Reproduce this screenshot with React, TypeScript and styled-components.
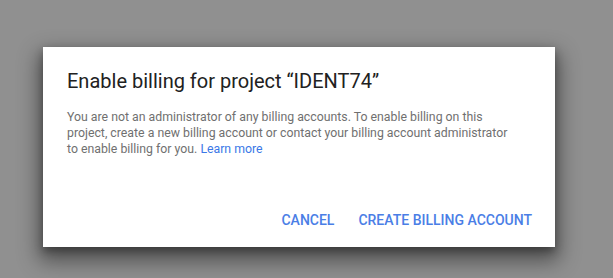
import styled, { createGlobalStyle } from 'styled-components';

const GlobalStyle = createGlobalStyle`
  html, body {
    margin: 0;
    padding: 0;
    background: #909090;
    font-family: Roboto, "Liberation Sans", Arial, sans-serif;
  }
`;

const Backdrop = styled.div`
  width: 613px;
  height: 278px;
  padding: 47px 0 0 43px;
  box-sizing: border-box;
  overflow: hidden;
`;

const Dialog = styled.section`
  width: 512px;
  height: 200px;
  box-sizing: border-box;
  background: #fff;
  padding: 22px 23px 9px 24px;
  display: flex;
  flex-direction: column;
  box-shadow: 0 10px 20px 4px rgba(0, 0, 0, 0.45), 0 4px 8px rgba(0, 0, 0, 0.3);
`;

const Title = styled.h2`
  margin: 0;
  font-size: 20px;
  line-height: 24px;
  font-weight: 400;
  color: #212121;
`;

const Body = styled.p`
  margin: 16px 0 0;
  font-size: 12.3px;
  line-height: 16px;
  color: #707070;
  white-space: nowrap;
`;

const Link = styled.a`
  color: #3b78e7;
  text-decoration: none;
`;

const Actions = styled.div`
  margin-top: auto;
  display: flex;
  justify-content: flex-end;
`;

const ActionButton = styled.button`
  border: 0;
  background: transparent;
  font-family: inherit;
  font-size: 14px;
  font-weight: 500;
  line-height: 36px;
  padding: 0 12px;
  color: #4a7ee6;
  &:last-child {
    padding-right: 0;
  }
`;

export default function App() {
  return (
    <>
      <GlobalStyle />
      <Backdrop>
        <Dialog>
          <Title>Enable billing for project “IDENT74”</Title>
          <Body>
            You are not an administrator of any billing accounts. To enable billing on this
            <br />
            project, create a new billing account or contact your billing account administrator
            <br />
            to enable billing for you. <Link href="#">Learn more</Link>
          </Body>
          <Actions>
            <ActionButton>CANCEL</ActionButton>
            <ActionButton>CREATE BILLING ACCOUNT</ActionButton>
          </Actions>
        </Dialog>
      </Backdrop>
    </>
  );
}
